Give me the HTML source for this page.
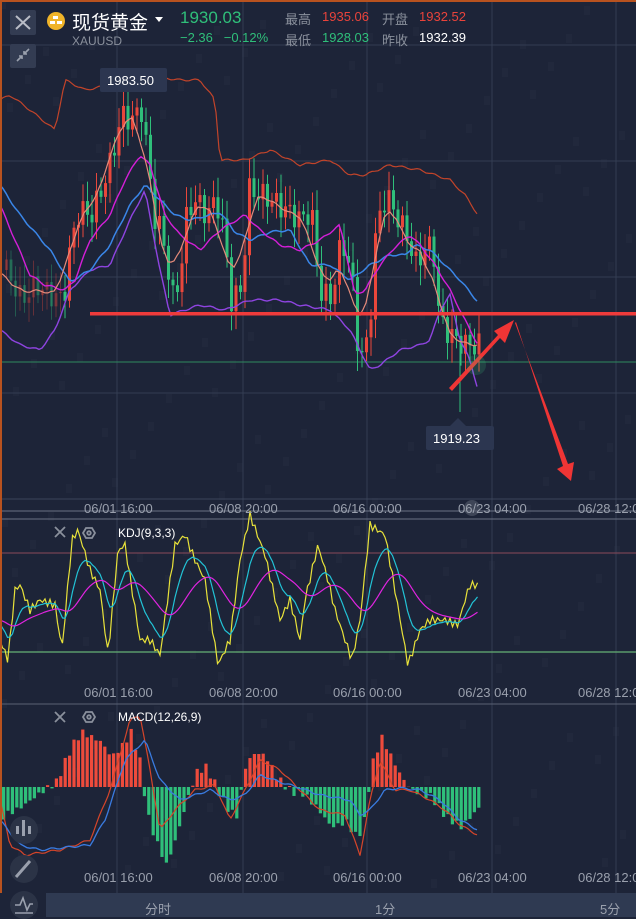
<!DOCTYPE html>
<html><head><meta charset="utf-8"><style>
html,body{margin:0;padding:0;background:#1d2438;width:636px;height:919px;overflow:hidden;font-family:"Liberation Sans","Noto Sans CJK SC",sans-serif}
#w{position:relative;width:636px;height:919px}
.t{position:absolute;white-space:nowrap}
</style></head><body><div id="w">
<svg id="s" width="636" height="919" style="position:absolute;left:0;top:0">
<rect width="636" height="919" fill="#1d2438"/>
<g id="bg" fill="#242c40"></g>
<g stroke="#343d52" stroke-width="1">
<line x1="117" y1="0" x2="117" y2="893"/><line x1="243" y1="0" x2="243" y2="893"/><line x1="367" y1="0" x2="367" y2="893"/><line x1="492" y1="0" x2="492" y2="893"/><line x1="616" y1="0" x2="616" y2="893"/>
<line x1="0" y1="45" x2="636" y2="45"/><line x1="0" y1="161" x2="636" y2="161"/><line x1="0" y1="277" x2="636" y2="277"/><line x1="0" y1="393" x2="636" y2="393"/>
</g>
<line x1="0" y1="499" x2="636" y2="499" stroke="#3c455a"/>
<line x1="0" y1="511" x2="636" y2="511" stroke="#6a7285"/>
<line x1="0" y1="519" x2="636" y2="519" stroke="#6a7285"/>
<line x1="0" y1="553" x2="636" y2="553" stroke="#8a4a5a"/>
<line x1="0" y1="652" x2="636" y2="652" stroke="#5a9a6a" stroke-width="1.5"/>
<line x1="0" y1="704" x2="636" y2="704" stroke="#5a6275"/>
<line x1="0" y1="362" x2="636" y2="362" stroke="#2e8a5e"/>
<g id="main"></g>
<rect x="90" y="312" width="546" height="3.5" fill="#ef3b3b"/>
<g id="ind"></g>
<polygon points="449,388 452,391 500,338 505,343 514,320 494,331 498,335" fill="#ef3535"/>
<polygon points="515,323 516,322 563,466 557,469 571,481 574,462 568,464" fill="#ef3535"/>
<rect x="0" y="0" width="636" height="2" fill="#b8521f"/>
<rect x="0" y="0" width="2" height="893" fill="#b8521f"/>
<rect x="0" y="893" width="636" height="26" fill="#1d2438"/>
<rect x="46" y="893" width="590" height="24" fill="#2f3a52"/>
<rect x="10" y="10" width="26" height="25" rx="2" fill="#333c52"/>
<path d="M16 16 L30 29 M30 16 L16 29" stroke="#b8bcc6" stroke-width="2"/>
<rect x="10" y="44" width="26" height="24" rx="2" fill="#333c52"/>
<path d="M17 61 L22 56 M19 56 h3 v3 M29 49 L24 54 M24 51 v3 h3" stroke="#9aa0ad" stroke-width="1.6" fill="none"/>
<circle cx="56" cy="21" r="9" fill="#f0b429"/>
<rect x="53" y="16" width="5" height="3" fill="#fff"/><rect x="50" y="21" width="5" height="3" fill="#fff"/><rect x="57" y="21" width="5" height="3" fill="#fff"/>
<path d="M155 17 L163 17 L159 22 Z" fill="#fff"/>
<rect x="100" y="68" width="67" height="24" rx="2" fill="#2c3650"/>
<rect x="426" y="426" width="68" height="24" rx="2" fill="#2c3650"/>
<path d="M450 426 L458 418 L466 426 Z" fill="#2c3650"/>
<circle cx="472" cy="508" r="8" fill="#555c6c" opacity="0.6"/>
<circle cx="476" cy="365" r="10" fill="#3ec77f" opacity="0.18"/>
<g stroke="#8a909c" stroke-width="1.8" fill="none">
<path d="M55 527 L65 537 M65 527 L55 537"/><path d="M55 712 L65 722 M65 712 L55 722"/>
<polygon points="86,528 92,528 95,533 92,538 86,538 83,533"/><circle cx="89" cy="533" r="1.8"/>
<polygon points="86,712 92,712 95,717 92,722 86,722 83,717"/><circle cx="89" cy="717" r="1.8"/>
</g>
<circle cx="24" cy="830" r="14" fill="#2b3346"/><circle cx="24" cy="869" r="14" fill="#2b3346"/><circle cx="24" cy="905" r="14" fill="#2b3346"/>
<g fill="#9aa0ad"><rect x="16" y="826" width="3" height="8"/><rect x="22" y="820" width="3" height="16"/><rect x="28" y="826" width="3" height="8"/></g>
<path d="M16 877 L30 861" stroke="#9aa0ad" stroke-width="3"/>
<path d="M15 905 L20 905 L23 898 L27 910 L30 904 L33 904 M15 913 H33" stroke="#9aa0ad" stroke-width="1.6" fill="none"/>
</svg>
<div class="t" style="left:72px;top:8px;font-size:19px;color:#fff">现货黄金</div>
<div class="t" style="left:72px;top:34px;font-size:12px;color:#8a909c">XAUUSD</div>
<div class="t" style="left:180px;top:8px;font-size:17px;color:#2fbf7a">1930.03</div>
<div class="t" style="left:180px;top:30px;font-size:13px;color:#2fbf7a">−2.36&nbsp;&nbsp;&nbsp;−0.12%</div>
<div class="t" style="left:285px;top:9px;font-size:13px;color:#8a909c">最高</div>
<div class="t" style="left:285px;top:30px;font-size:13px;color:#8a909c">最低</div>
<div class="t" style="left:322px;top:9px;font-size:13px;color:#e9433b">1935.06</div>
<div class="t" style="left:322px;top:30px;font-size:13px;color:#2fbf7a">1928.03</div>
<div class="t" style="left:382px;top:9px;font-size:13px;color:#8a909c">开盘</div>
<div class="t" style="left:382px;top:30px;font-size:13px;color:#8a909c">昨收</div>
<div class="t" style="left:419px;top:9px;font-size:13px;color:#e9433b">1932.52</div>
<div class="t" style="left:419px;top:30px;font-size:13px;color:#fff">1932.39</div>
<div class="t" style="left:107px;top:73px;font-size:13px;color:#fff">1983.50</div>
<div class="t" style="left:433px;top:431px;font-size:13px;color:#fff">1919.23</div>
<div class="t" style="left:118px;top:526px;font-size:12px;color:#fff">KDJ(9,3,3)</div>
<div class="t" style="left:118px;top:710px;font-size:12px;color:#fff">MACD(12,26,9)</div>
<div id="lab"></div>
<div class="t" style="left:145px;top:899px;font-size:13px;color:#9aa0ad">分时</div>
<div class="t" style="left:375px;top:899px;font-size:13px;color:#9aa0ad">1分</div>
<div class="t" style="left:600px;top:899px;font-size:13px;color:#9aa0ad">5分</div>
</div>
<script>
var NS="http://www.w3.org/2000/svg";
function el(p,t,a){var e=document.createElementNS(NS,t);for(var k in a)e.setAttribute(k,a[k]);p.appendChild(e);return e;}
function interp(kp,x){for(var i=0;i<kp.length-2;i+=2){if(x<=kp[i+2]){var t=(x-kp[i])/(kp[i+2]-kp[i]);return kp[i+1]+(kp[i+3]-kp[i+1])*Math.max(0,t);}}return kp[kp.length-1];}
function line(g,kp,col,w,x0,x1){var pts=[];for(var x=x0;x<=x1;x+=3)pts.push(x+","+(interp(kp,x)+Math.sin(x*1.7)*1.0).toFixed(1));el(g,"polyline",{points:pts.join(" "),fill:"none",stroke:col,"stroke-width":w||1.3});}
var bg=document.getElementById("bg");
for(var i=0;i<220;i++){var x=(i*53)%630,y=(i*97)%880;el(bg,"rect",{x:x,y:y,width:6,height:9,opacity:0.6});}
var m=document.getElementById("main");
var price=[5,270,20,300,35,285,50,295,62,300,70,240,78,210,90,215,100,190,110,160,120,115,130,120,140,110,147,160,152,215,160,230,166,265,172,300,178,280,186,210,195,200,205,215,215,200,222,230,230,300,240,290,248,190,260,195,270,200,285,210,300,220,310,210,318,290,330,300,340,240,350,270,356,340,362,360,368,330,375,225,385,195,395,215,405,235,415,265,425,245,432,250,438,320,445,330,455,340,465,345,478,345];
var up=[0,100,10,95,30,110,55,130,65,80,85,90,110,85,140,75,180,80,200,80,215,100,220,160,245,160,270,150,300,165,330,160,350,175,365,175,390,165,420,170,450,180,465,195,478,215];
var lo=[0,330,20,345,40,350,55,330,70,290,90,270,110,265,130,220,145,190,160,270,170,315,185,310,200,305,225,310,250,300,280,300,300,305,330,310,350,330,370,370,380,365,400,350,420,345,430,340,440,310,450,295,460,340,470,360,478,390];
var blue=[0,185,20,215,50,250,70,282,90,270,110,245,130,205,145,185,160,200,175,215,190,220,210,215,220,212,235,232,250,240,270,232,290,230,310,265,330,265,350,280,370,265,390,255,405,255,415,245,430,250,445,265,460,280,478,302];
var mag=[0,205,15,240,30,275,45,285,65,290,75,280,90,240,110,215,125,180,140,155,150,165,165,215,180,235,200,250,220,230,245,215,260,230,280,245,300,250,320,240,340,225,355,295,365,290,380,265,395,247,410,235,420,245,435,265,450,290,465,320,478,345];
var prev=interp(price,0);
for(var x=5;x<=478;x+=4.5){var c=interp(price,x)+Math.sin(x*2.3)*12;var o=prev;prev=c;var hi=Math.min(o,c)-6-Math.abs(Math.sin(x*1.3))*14,lw=Math.max(o,c)+6+Math.abs(Math.cos(x*0.9))*14;
var col=c<o?"#e9473b":"#2fbf7a";var op=x<60?0.35:1;
el(m,"line",{x1:x+1.5,y1:hi,x2:x+1.5,y2:lw,stroke:col,opacity:op});el(m,"rect",{x:x,y:Math.min(o,c),width:3,height:Math.max(1,Math.abs(c-o)),fill:col,opacity:op});}
el(m,"line",{x1:460,y1:350,x2:460,y2:412,stroke:"#2fbf7a"});
line(m,up,"#c2442a",1.2,0,478);line(m,lo,"#8e44e0",1.4,0,478);line(m,blue,"#3a86e8",1.5,0,478);line(m,mag,"#d41fd8",1.4,0,478);
var sm=[];for(var x=0;x<=478;x+=6){var s=0;for(var k=-3;k<=3;k++)s+=interp(price,x+k*4);sm.push(x,s/7);}line(m,sm,"#e58a7a",1.2,0,478);
var ind=document.getElementById("ind");
var J=[0,640,8,660,15,590,20,585,30,610,40,600,55,605,62,650,72,540,78,530,90,570,100,590,108,655,118,550,125,545,140,640,150,640,160,655,175,545,185,535,195,560,205,580,218,665,230,640,240,560,250,515,265,555,280,620,290,600,300,640,305,600,318,545,328,580,335,610,345,640,352,660,360,620,370,525,385,535,395,590,408,665,420,630,430,620,445,620,458,625,465,600,470,585,478,585];
var pj=[],pk=[],pd=[],K=620,D=620;for(var x=0;x<=478;x+=2.5){var j=interp(J,x)+Math.sin(x*1.1)*4;K=K*0.82+j*0.18;D=D*0.9+K*0.1;pj.push(x+","+j.toFixed(1));pk.push(x+","+K.toFixed(1));pd.push(x+","+D.toFixed(1));}
el(ind,"polyline",{points:pj.join(" "),fill:"none",stroke:"#e8e23a","stroke-width":1.2});
el(ind,"polyline",{points:pk.join(" "),fill:"none",stroke:"#22c3d6","stroke-width":1.2});
el(ind,"polyline",{points:pd.join(" "),fill:"none",stroke:"#e024e0","stroke-width":1.2});
var H=[0,-30,20,-20,40,-5,55,5,70,40,80,55,100,45,110,30,120,40,130,55,140,20,145,-25,155,-55,165,-78,175,-50,185,-15,195,15,205,20,215,0,225,-20,235,-30,245,25,255,35,265,30,275,10,290,-5,300,-5,315,-20,330,-40,345,-35,355,-50,362,-40,370,20,380,50,390,30,400,10,410,-3,430,-10,445,-30,460,-40,478,-20];
for(var x=2;x<=478;x+=4.4){var h=interp(H,x)+Math.sin(x*2.1)*4;el(ind,"rect",{x:x,y:h>0?787-h:787,width:3.2,height:Math.abs(h),fill:h>0?"#ee4b3c":"#2fbf7a"});}
var dif=[0,800,10,845,25,855,60,850,90,840,110,790,130,720,140,715,150,770,160,830,175,810,195,790,215,785,230,820,245,790,260,760,280,770,300,790,320,810,345,815,360,855,370,800,380,760,395,790,410,790,430,800,445,810,460,825,478,835];
var dea=[0,820,20,845,40,850,90,845,105,820,125,760,145,740,160,780,180,800,210,790,230,800,245,795,260,775,280,782,300,788,320,795,350,800,360,815,370,810,385,790,400,788,420,790,440,800,460,820,478,830];
line(ind,dif,"#d6452a",1.2,0,478);line(ind,dea,"#3a7be0",1.3,0,478);
var lab=document.getElementById("lab"),T=["06/01 16:00","06/08 20:00","06/16 00:00","06/23 04:00","06/28 12:00"],X=[84,209,333,458,578];
[501,685,870].forEach(function(y){T.forEach(function(t,i){var d=document.createElement("div");d.className="t";d.style.cssText="left:"+X[i]+"px;top:"+y+"px;font-size:13px;color:#9aa0ad";d.textContent=t;lab.appendChild(d);});});
</script>
</body></html>
